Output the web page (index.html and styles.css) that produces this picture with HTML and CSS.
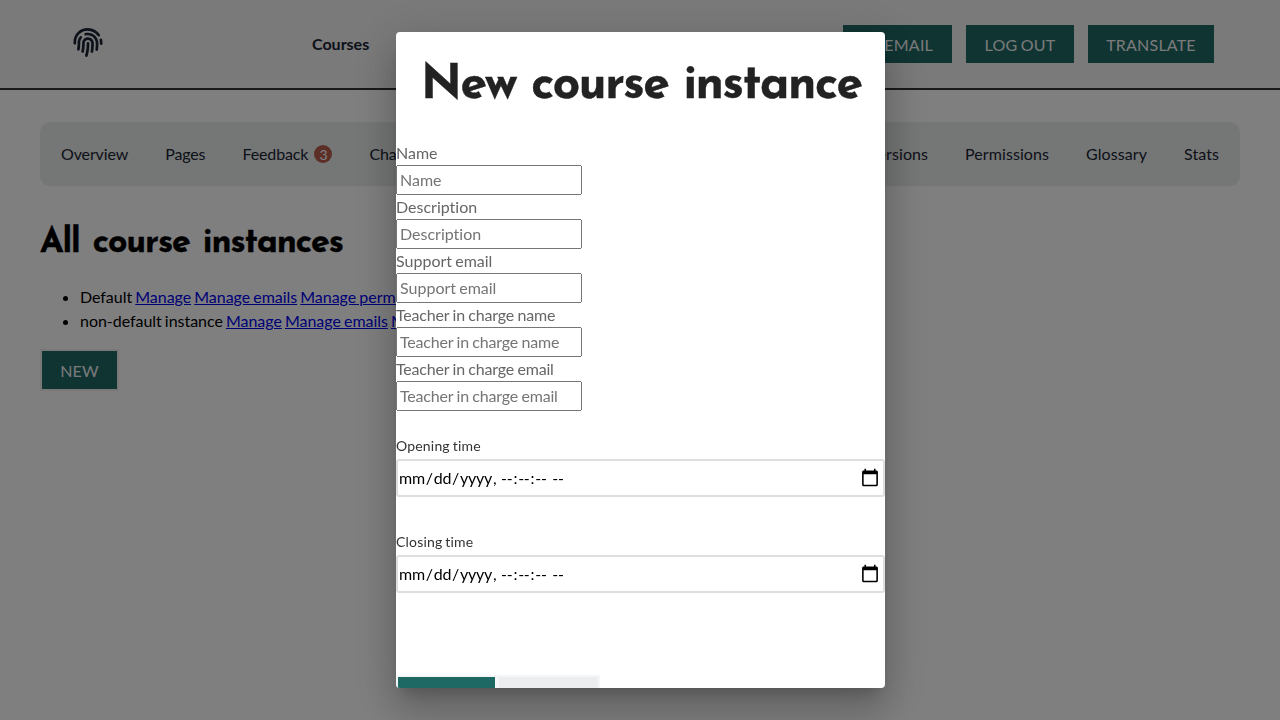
FILE: index.html
```html
<!DOCTYPE html>
<html lang="en">
<head>
<meta charset="utf-8">
<title>All course instances</title>
<link rel="stylesheet" href="styles.css">
</head>
<body>
<header class="topbar">
  <div class="brand">
    <svg class="logo" viewBox="0 0 512 512" fill="currentColor"><path d="M256.12 245.96c-13.25 0-24 10.74-24 24 1.14 72.25-8.14 141.9-27.7 211.55-2.73 9.72 2.15 30.49 23.12 30.49 10.48 0 20.11-6.92 23.09-17.52 13.53-47.91 31.04-125.41 29.48-224.52.01-13.25-10.73-24-23.99-24zm-.86-81.73C194 164.16 151.25 211.3 152.1 265.32c.75 47.94-3.75 95.91-13.37 142.55-2.69 12.98 5.67 25.69 18.64 28.36 13.05 2.67 25.67-5.66 28.36-18.64 10.34-50.09 15.17-101.58 14.37-153.02-.41-25.95 19.92-52.49 54.45-52.34 31.31.47 57.15 25.34 57.62 55.47.77 48.05-2.81 96.33-10.61 143.55-2.17 13.06 6.69 25.42 19.76 27.58 19.97 3.33 26.81-15.1 27.58-19.77 8.28-50.03 12.06-101.21 11.27-152.11-.88-55.8-47.94-101.88-104.91-102.72zm-110.69-19.78c-10.3-8.34-25.37-6.8-33.76 3.48-25.62 31.5-39.39 71.28-38.75 112 .59 37.58-2.47 75.27-9.11 112.05-2.34 13.05 6.31 25.53 19.36 27.89 20.11 3.5 27.07-14.81 27.89-19.36 7.19-39.84 10.5-80.66 9.86-121.33-.47-29.88 9.2-57.88 28-80.97 8.35-10.28 6.79-25.39-3.49-33.76zm109.47-62.33c-15.41-.41-30.87 1.44-45.78 4.97-12.89 3.06-20.87 15.98-17.83 28.89 3.06 12.89 16 20.83 28.89 17.83 11.05-2.61 22.47-3.77 34-3.75 75.43 1.13 137.73 61.5 138.88 134.58.59 37.88-1.28 76.11-5.58 113.63-1.5 13.17 7.95 25.08 21.11 26.58 16.72 1.95 25.51-11.88 26.58-21.11a929.06 929.06 0 0 0 5.89-119.85c-1.56-98.75-85.07-180.33-186.16-181.77zm252.07 121.45c-2.86-12.92-15.51-21.2-28.61-18.27-12.94 2.86-21.12 15.66-18.26 28.61 4.71 21.41 4.91 37.41 4.7 61.6-.11 13.27 10.55 24.09 23.8 24.2h.2c13.17 0 23.89-10.61 24-23.8.18-22.18.4-44.11-5.83-72.34zm-40.12-90.72C417.29 43.46 337.6 1.29 252.81.02 183.02-.82 118.47 24.91 70.46 72.94 24.09 119.37-.9 181.04.14 246.65l-.12 21.47c-.39 13.25 10.03 24.31 23.28 24.69.23.02.48.02.72.02 12.92 0 23.59-10.3 23.97-23.3l.16-23.64c-.83-52.5 19.16-101.86 56.28-139 38.76-38.8 91.34-59.67 147.68-58.86 69.45 1.03 134.73 35.56 174.62 92.39 7.61 10.86 22.56 13.45 33.42 5.86 10.84-7.62 13.46-22.59 5.84-33.43z"/></svg>
    <a class="toplink">Courses</a>
  </div>
  <div class="actions">
    <a class="btn email">MY EMAIL</a>
    <a class="btn logout">LOG OUT</a>
    <a class="btn translate">TRANSLATE</a>
  </div>
</header>
<main class="page">
  <nav class="tabs">
    <div class="tabgroup">
      <a>Overview</a><a>Pages</a><a>Feedback<span class="badge">3</span></a><a>Change requests</a>
    </div>
    <div class="tabgroup end">
      <a>Versions</a><a>Permissions</a><a>Glossary</a><a>Stats</a>
    </div>
  </nav>
  <h1 class="title">All course instances</h1>
  <ul class="instances">
    <li>Default <a href="#">Manage</a> <a href="#">Manage emails</a> <a href="#">Manage permissions</a></li>
    <li>non-default instance <a href="#">Manage</a> <a href="#">Manage emails</a> <a href="#">Manage permissions</a></li>
  </ul>
  <button class="btn new">NEW</button>
</main>
<div class="backdrop">
  <section class="dialog">
    <h1 class="dialog-title">New course instance</h1>
    <form class="form">
      <label class="field">Name<input placeholder="Name"></label>
      <label class="field">Description<input placeholder="Description"></label>
      <label class="field">Support email<input placeholder="Support email"></label>
      <label class="field tight">Teacher in charge name<input placeholder="Teacher in charge name"></label>
      <label class="field tight">Teacher in charge email<input placeholder="Teacher in charge email"></label>
      <label class="time">Opening time<input type="datetime-local" step="1"></label>
      <label class="time">Closing time<input type="datetime-local" step="1"></label>
      <div class="buttons"><button type="button" class="primary"></button><button type="button" class="secondary"></button></div>
    </form>
  </section>
</div>
</body>
</html>
```
FILE: styles.css
```css
* { box-sizing: border-box; }
body {
  margin: 0;
  height: 720px;
  overflow: hidden;
  background: #fff;
  color: #000;
  font: 16px/24px Lato, sans-serif;
  font-variant-ligatures: none;
  word-spacing: -0.9px;
}
.topbar {
  display: flex;
  justify-content: space-between;
  align-items: center;
  height: 90px;
  padding: 0 66px 0 73px;
  background: #f4f4f4;
  border-bottom: 2px solid #333;
}
.brand { display: flex; align-items: center; gap: 209px; color: #1a2333; }
.logo { width: 30px; height: 29px; margin-top: -4px; }
.toplink { font-weight: 700; }
.actions { display: flex; gap: 14px; }
.btn {
  display: flex;
  align-items: center;
  justify-content: center;
  height: 38px;
  background: #1f6964;
  color: #f4f4f4;
  font: 16px/24px Lato, sans-serif;
  letter-spacing: 0.2px;
  padding-top: 2px;
}
.email { width: 109px; justify-content: flex-end; padding-right: 19px; }
.logout { width: 108px; }
.translate { width: 126px; }
.page { padding: 32px 40px; }
.tabs {
  display: flex;
  justify-content: space-between;
  align-items: center;
  height: 64px;
  padding: 0 21px;
  border-radius: 10px;
  background: #e9eeec;
  color: #1a2333;
  letter-spacing: -0.12px;
}
.tabgroup { display: flex; gap: 37px; }
.tabgroup.end { letter-spacing: 0.08px; }
.tabgroup a { display: flex; align-items: center; }
.badge {
  width: 18px;
  height: 18px;
  margin-left: 6px;
  border-radius: 50%;
  background: #b85c4c;
  color: #fff;
  font-size: 14px;
  line-height: 19px;
  text-align: center;
}
.title {
  width: max-content;
  margin: 33px 0 16px;
  font: 700 34px/50px "Josefin Sans", Lato, sans-serif;
  letter-spacing: -1.1px;
  word-spacing: 3.2px;
  -webkit-text-stroke: 0.4px currentColor;
}
.instances { margin: 0 0 16px; padding-left: 40px; letter-spacing: -0.04px; }
.instances a { color: #0000ee; }
.new { width: 79px; height: 42px; border: 2px solid #f0f0f0; padding: 2px 0 0; background-clip: padding-box; }
.backdrop {
  position: fixed;
  inset: 0;
  display: flex;
  align-items: center;
  justify-content: center;
  background: rgba(0, 0, 0, 0.5);
}
.dialog {
  width: 489px;
  height: 656px;
  margin-left: 1px;
  overflow: hidden;
  border-radius: 4px;
  background: #fff;
  box-shadow: 0 11px 15px -7px rgba(0,0,0,.2), 0 24px 38px 3px rgba(0,0,0,.14), 0 9px 46px 8px rgba(0,0,0,.12);
}
.dialog-title {
  margin: 0;
  padding: 14px 20px 15px 25px;
  color: #222;
  font: 700 48px/80px "Josefin Sans", Lato, sans-serif;
  letter-spacing: -1.5px;
  word-spacing: 1px;
  white-space: nowrap;
  -webkit-text-stroke: 0.4px currentColor;
}
.form { display: flex; flex-direction: column; }
.field { display: flex; flex-direction: column; align-items: flex-start; color: #666; }
.field input {
  width: 186px;
  height: 30px;
  padding: 0 2px 2px;
  font: 16px/24px Lato, sans-serif;
  font-variant-ligatures: none;
  letter-spacing: inherit;
  word-spacing: inherit;
}
.tight { letter-spacing: -0.2px; word-spacing: -0.4px; }
.time { display: flex; flex-direction: column; margin-top: 24px; height: 72px; color: #333; font-size: 14px; line-height: 22px; letter-spacing: 0.18px; }
.time input {
  height: 38px;
  margin-top: 2px;
  padding: 1px 3px 1px 0;
  border: 2px solid #dedede;
  border-radius: 3px;
  font: 16px/24px Lato, sans-serif;
  letter-spacing: -0.28px;
}
.time input::-webkit-calendar-picker-indicator { width: 20px; height: 20px; padding: 0; }
.buttons { display: flex; margin-top: 72px; }
.buttons button { height: 42px; padding: 0; border: 2px solid #f5f6f7; }
.primary { width: 101px; background: #1f6964; }
.secondary { width: 103px; background: #ebedee; }
```
